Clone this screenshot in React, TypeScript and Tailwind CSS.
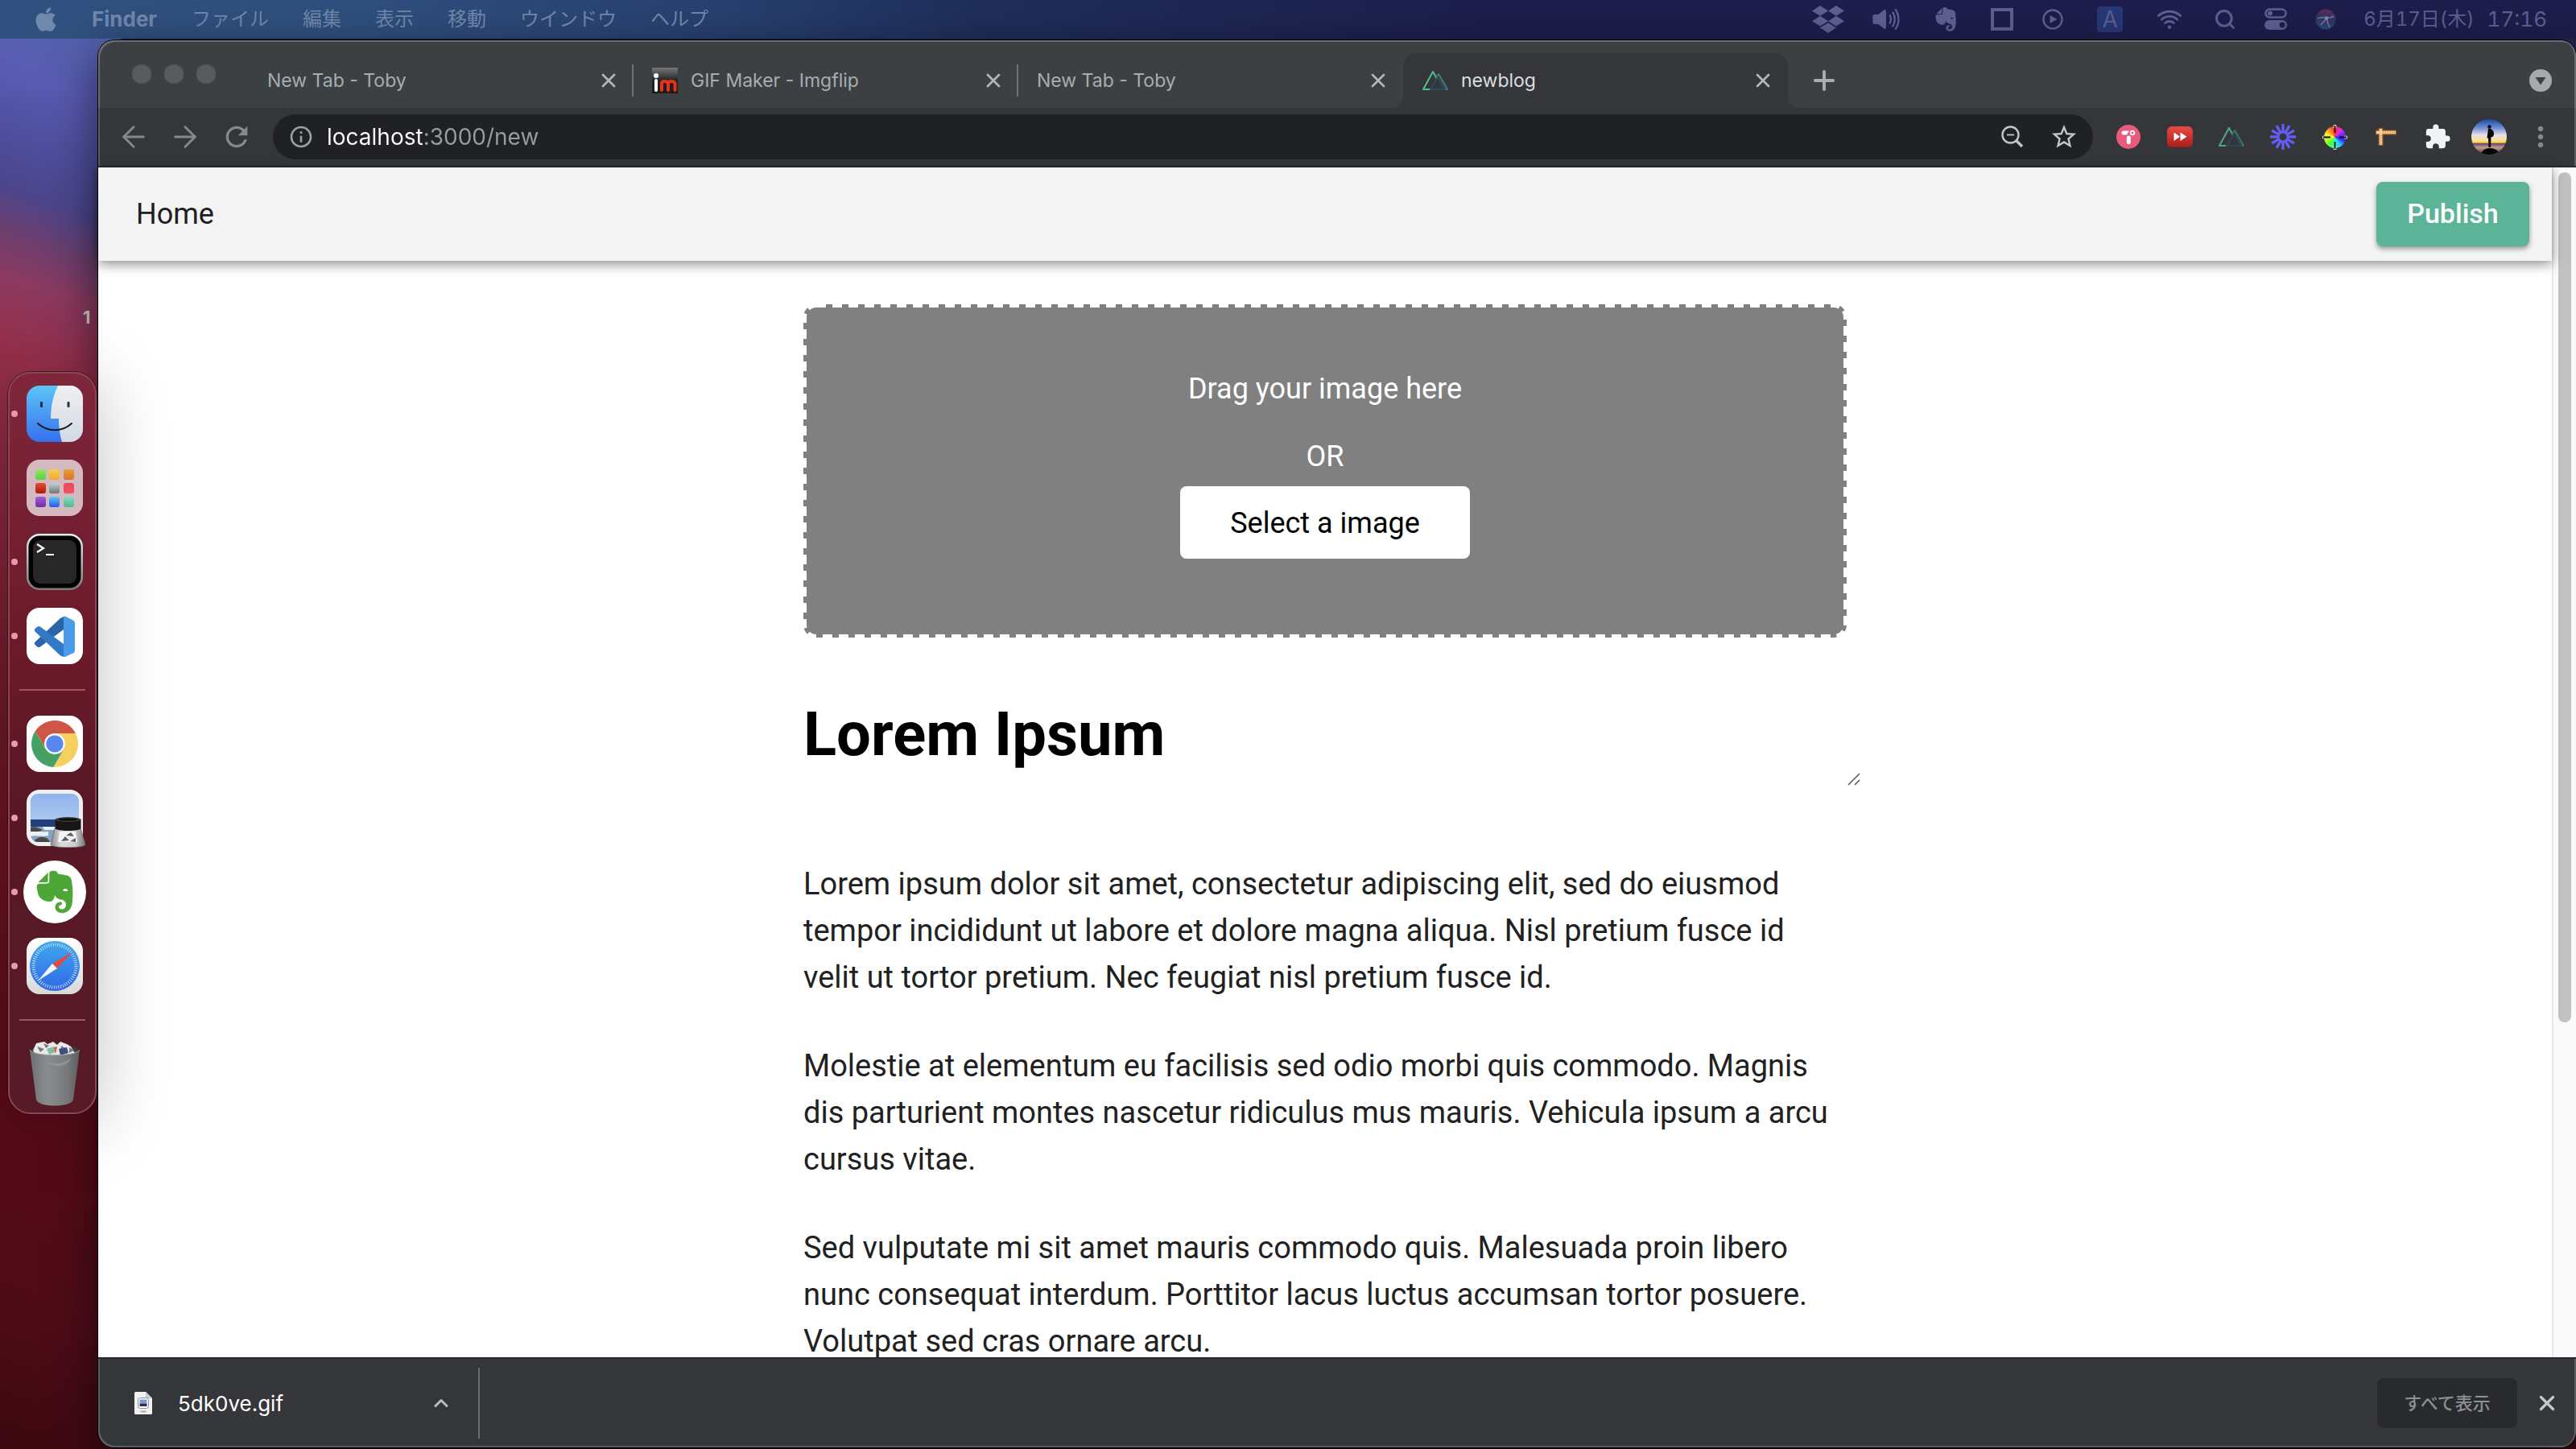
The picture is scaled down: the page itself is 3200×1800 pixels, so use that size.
import React, { type ReactNode } from 'react';
import { FaApple, FaDropbox, FaEvernote } from 'react-icons/fa';
import { MdExtension, MdInfoOutline, MdMoreVert, MdRefresh, MdStarBorder } from 'react-icons/md';
import { IoVolumeHigh, IoWifi } from 'react-icons/io5';
import { ArrowLeft, ArrowRight, ChevronUp, Plus, Search, X } from 'lucide-react';

const menus = ['ファイル', '編集', '表示', '移動', 'ウインドウ', 'ヘルプ'];

const paragraphs = [
  'Lorem ipsum dolor sit amet, consectetur adipiscing elit, sed do eiusmod tempor incididunt ut labore et dolore magna aliqua. Nisl pretium fusce id velit ut tortor pretium. Nec feugiat nisl pretium fusce id.',
  'Molestie at elementum eu facilisis sed odio morbi quis commodo. Magnis dis parturient montes nascetur ridiculus mus mauris. Vehicula ipsum a arcu cursus vitae.',
  'Sed vulputate mi sit amet mauris commodo quis. Malesuada proin libero nunc consequat interdum. Porttitor lacus luctus accumsan tortor posuere. Volutpat sed cras ornare arcu.',
];

/* ---------- menu bar ---------- */

function ControlCenterIcon() {
  return (
    <svg viewBox="0 0 28 28" className="size-7 shrink-0">
      <rect x="1.5" y="1.5" width="25" height="10" rx="5" fill="none" stroke="currentColor" strokeWidth="2.5" />
      <circle cx="7" cy="6.5" r="3" fill="currentColor" />
      <rect x="0" y="15" width="28" height="12" rx="6" fill="currentColor" />
      <circle cx="22" cy="21" r="3.4" fill="#1d1e4c" />
    </svg>
  );
}

function SiriIcon() {
  return (
    <svg viewBox="0 0 28 28" className="size-7">
      <defs>
        <linearGradient id="siri" x1="0.6" y1="0" x2="0.4" y2="1">
          <stop offset="0" stopColor="#5f2a5c" />
          <stop offset="0.5" stopColor="#32335f" />
          <stop offset="1" stopColor="#274a84" />
        </linearGradient>
      </defs>
      <circle cx="14" cy="14" r="12.5" fill="url(#siri)" />
      <path d="M4 13q6-2 11-1t9-2" fill="none" stroke="#3f8a8e" strokeWidth="1.6" />
      <path d="M8 21q4-4 7-9M15 12q1 6 4 12" fill="none" stroke="#7d6fa0" strokeWidth="1.6" />
      <circle cx="15" cy="12.500" r="2.2" fill="#8a86a8" />
    </svg>
  );
}

function StatusButton({ label, className, children }: { label: string; className: string; children: ReactNode }) {
  return (
    <button aria-label={label} className={`flex shrink-0 items-center justify-center ${className}`}>
      {children}
    </button>
  );
}

function MenuBar() {
  return (
    <header className="flex h-12 shrink-0 items-center bg-[linear-gradient(to_right,#30507f_0%,#2f4f7e_14%,#27406f_28%,#1f2e5a_38%,#1d1e4c_58%,#1d1e4c_100%)] text-2xl text-[#7088ac]">
      <button aria-label="Apple" className="ml-[41px] flex w-8 justify-center text-[34px]">
        <FaApple />
      </button>
      <button className="ml-[41px] text-[26px] font-bold">Finder</button>
      <nav className="ml-[43px] flex gap-[42px]">
        {menus.map((m) => (
          <button key={m} className="whitespace-nowrap">
            {m}
          </button>
        ))}
      </nav>
      <div className="ml-auto flex items-center gap-6 pr-9 text-[#5f5f92]">
        <StatusButton label="Dropbox" className="w-[46px] text-[40px]">
          <FaDropbox />
        </StatusButton>
        <StatusButton label="Volume" className="w-[50px] text-[38px]">
          <IoVolumeHigh />
        </StatusButton>
        <StatusButton label="Evernote" className="w-[50px] text-[34px]">
          <FaEvernote />
        </StatusButton>
        <StatusButton label="Window" className="w-[42px]">
          <span className="size-7 border-4 border-current" />
        </StatusButton>
        <StatusButton label="Play" className="w-9">
          <svg viewBox="0 0 26 26" className="size-[26px]">
            <circle cx="13" cy="13" r="11.5" fill="none" stroke="currentColor" strokeWidth="2.4" />
            <path d="M9.5 8v10l9-5z" fill="currentColor" />
          </svg>
        </StatusButton>
        <StatusButton label="Input source" className="w-[58px]">
          <span className="flex size-8 items-center justify-center rounded bg-[#283878] text-[28px] leading-8 text-[#5b5f8c]">A</span>
        </StatusButton>
        <StatusButton label="Wi-Fi" className="w-[42px] text-[36px]">
          <IoWifi />
        </StatusButton>
        <StatusButton label="Search" className="w-12">
          <Search className="size-7" strokeWidth={2.6} />
        </StatusButton>
        <StatusButton label="Control center" className="w-[30px]">
          <ControlCenterIcon />
        </StatusButton>
        <StatusButton label="Siri" className="w-[46px]">
          <SiriIcon />
        </StatusButton>
        <button className="flex items-center gap-4 whitespace-nowrap text-[26px]">
          <span className="text-2xl tabular-nums">6月17日(木)</span>
          <span className="tabular-nums">17:16</span>
        </button>
      </div>
    </header>
  );
}

/* ---------- dock ---------- */

function FinderIcon() {
  return (
    <svg viewBox="0 0 70 70" className="size-[70px] rounded-2xl">
      <defs>
        <linearGradient id="fb" x1="0" y1="0" x2="0" y2="1">
          <stop offset="0" stopColor="#5cc5f7" />
          <stop offset="1" stopColor="#3570ee" />
        </linearGradient>
        <linearGradient id="fw" x1="0" y1="0" x2="0" y2="1">
          <stop offset="0" stopColor="#f0eff1" />
          <stop offset="1" stopColor="#d3d9e4" />
        </linearGradient>
      </defs>
      <rect width="70" height="70" fill="url(#fb)" />
      <path d="M39 0C33 12 30 26 30 41h10c0 10 1 20 4 29h26V0z" fill="url(#fw)" />
      <rect x="17" y="20" width="3" height="7" rx="1" fill="#222b3a" />
      <rect x="50.500" y="20" width="3" height="7" rx="1" fill="#333" />
      <path d="M14 47c12 11 30 11 42 0" fill="none" stroke="#15181d" strokeWidth="2" strokeLinecap="round" />
    </svg>
  );
}

const launchpadTiles = [
  ['#8fe86a', '#5bd038'],
  ['#f8ce4a', '#f0a82e'],
  ['#eb9d3c', '#d97428'],
  ['#e44a35', '#a91d12'],
  ['#c5ced6', '#6f7476'],
  ['#e8485f', '#ee5560'],
  ['#a85ad8', '#6e2fa8'],
  ['#5cc8f8', '#2b55e8'],
  ['#84dccc', '#55b886'],
];

function LaunchpadIcon() {
  return (
    <div className="grid size-[70px] grid-cols-3 content-center justify-center justify-items-center gap-y-1 rounded-2xl bg-[#d4b9c0] px-[9px]">
      {launchpadTiles.map(([a, b]) => (
        <span key={a} className="size-[13px] rounded-[3px]" style={{ backgroundImage: `linear-gradient(${a}, ${b})` }} />
      ))}
    </div>
  );
}

function TerminalIcon() {
  return (
    <svg viewBox="0 0 70 70" className="size-[70px]">
      <defs>
        <linearGradient id="tb" x1="0" y1="0" x2="0" y2="1">
          <stop offset="0" stopColor="#dff0f5" />
          <stop offset="1" stopColor="#7a7a7a" />
        </linearGradient>
      </defs>
      <rect width="70" height="70" rx="16" fill="url(#tb)" />
      <rect x="2.500" y="2.500" width="65" height="65" rx="14" fill="#000" />
      <rect x="8" y="8" width="54" height="54" rx="9" fill="#272727" />
      <path d="M13 13l8 5-8 5M24 26h10" fill="none" stroke="#fff" strokeWidth="2.2" />
    </svg>
  );
}

function VsCodeIcon() {
  return (
    <svg viewBox="0 0 70 70" className="size-[70px]">
      <rect width="70" height="70" rx="16" fill="#fff" />
      <path d="M46 11v16L17 48.500q-2 1.200-3.500 0L10.500 46q-1.500-1.800 0-3.500L42 13z" fill="#2966a8" />
      <path d="M46 61V45L17 23.500q-2-1.200-3.500 0L10.500 26q-1.500 1.800 0 3.500L42 59.500z" fill="#3279c6" />
      <path d="M46 11q1-1 3 0l9.500 5q1.500 1 1.500 3v34q0 2-1.500 3L49 60.500q-2 1-3 0z" fill="#4a9bea" />
    </svg>
  );
}

function ChromeIcon() {
  return (
    <svg viewBox="0 0 70 70" className="size-[70px]">
      <rect width="70" height="70" rx="16" fill="#fdfdfd" />
      <path d="M10.800 19.100A29 29 0 0 1 60.900 22H35L23.700 41.500z" fill="#cf5647" />
      <path d="M60.900 22A29 29 0 0 1 33.300 63.900L46.300 41.500 35 22z" fill="#f7cf5c" />
      <path d="M33.300 63.900A29 29 0 0 1 10.800 19.100L23.700 41.500H46.300z" fill="#47a063" />
      <circle cx="35" cy="35" r="13" fill="#f4f5f8" />
      <circle cx="35" cy="35" r="10.600" fill="#5686ee" />
    </svg>
  );
}

function PreviewIcon() {
  return (
    <svg viewBox="0 0 74 74" className="-mr-1 size-[74px] shrink-0">
      <defs>
        <linearGradient id="sky" x1="0" y1="0" x2="0" y2="1">
          <stop offset="0" stopColor="#8fb4ec" />
          <stop offset="1" stopColor="#c3d6f3" />
        </linearGradient>
        <linearGradient id="glass" x1="0" y1="0" x2="1" y2="0">
          <stop offset="0" stopColor="#8a8a8a" />
          <stop offset="0.300" stopColor="#dcdcdc" />
          <stop offset="0.700" stopColor="#cfcfcf" />
          <stop offset="1" stopColor="#777" />
        </linearGradient>
        <clipPath id="photo">
          <rect x="5" y="7" width="60" height="60" rx="9" />
        </clipPath>
      </defs>
      <rect y="2" width="70" height="70" rx="16" fill="#f0eff0" />
      <g clipPath="url(#photo)">
        <rect x="5" y="7" width="60" height="60" fill="url(#sky)" />
        <rect x="5" y="39" width="60" height="10" fill="#22407c" />
        <rect x="5" y="48" width="60" height="20" fill="#86a4c4" />
        <path d="M5 54c6-3 12 2 22 0v5c-8 2-14-1-22 1zM20 48h16v4H22z" fill="#e9f0f6" />
        <path d="M5 49c5-2 9 0 15 3l-5 2H5zM9 66c6-7 14-6 18-2l3 4H9z" fill="#4b4742" />
      </g>
      <path d="M35 50l-5 20c0 5 43 5 43 0l-6-20z" fill="url(#glass)" stroke="#666" strokeWidth="0.800" />
      <path d="M41 54l-2 13h24l-2-13z" fill="#f4f4f4" />
      <path d="M43 66l5-6 5 5zM49 59l6-4 4 5zM54 66l7-4v5z" fill="#59636d" />
      <path d="M35.500 39v11c0 4 32 4 32 0V39z" fill="#161616" />
      <ellipse cx="51.500" cy="39" rx="16" ry="3" fill="#3a3a3a" />
      <ellipse cx="51.500" cy="39" rx="12" ry="1.600" fill="#0d0d0d" />
    </svg>
  );
}

function EvernoteIcon() {
  return (
    <span className="-mx-1 flex size-[78px] shrink-0 items-center justify-center rounded-full bg-white text-[60px] text-[#4da636]">
      <FaEvernote />
    </span>
  );
}

function SafariIcon() {
  return (
    <svg viewBox="0 0 70 70" className="size-[70px]">
      <defs>
        <linearGradient id="sf" x1="0" y1="0" x2="0" y2="1">
          <stop offset="0" stopColor="#41a8ee" />
          <stop offset="1" stopColor="#2f68e4" />
        </linearGradient>
        <linearGradient id="sfb" x1="0" y1="0" x2="0" y2="1">
          <stop offset="0" stopColor="#fff" />
          <stop offset="1" stopColor="#d9d9d9" />
        </linearGradient>
      </defs>
      <rect width="70" height="70" rx="16" fill="url(#sfb)" />
      <circle cx="35" cy="35" r="31" fill="url(#sf)" />
      <circle cx="35" cy="35" r="26.500" fill="none" stroke="#cfe6fb" strokeWidth="4" strokeDasharray="0.900 1.870" />
      <path d="M57 17.500L38 38 32 32z" fill="#e4493f" />
      <path d="M14 53.500L32 32 38 38z" fill="#f4f4f4" />
    </svg>
  );
}

function TrashIcon() {
  return (
    <svg viewBox="0 0 64 82" className="h-[82px] w-16">
      <defs>
        <linearGradient id="bin" x1="0" y1="0" x2="1" y2="0">
          <stop offset="0" stopColor="#6d6f72" />
          <stop offset="0.350" stopColor="#8a8c8e" />
          <stop offset="0.750" stopColor="#77797b" />
          <stop offset="1" stopColor="#5a5c5f" />
        </linearGradient>
      </defs>
      <ellipse cx="32" cy="12" rx="30" ry="7" fill="#3c3d40" />
      <path d="M5 12l4-9 10-2 4 3 7-3 5 4 4-4 8 3 5 3 5 8-6 7H12z" fill="#e9e9ea" />
      <path d="M10 7l9 3-5 4zM18 3l7 3-4 3zM40 6l8 5-9 3zM50 8l6 4-6 3z" fill="#77797e" />
      <path d="M22 10l9-3 2 7-8 3z" fill="#7fc0a8" />
      <path d="M31 8l2 8 2-9z" fill="#d9573c" />
      <path d="M37 10l10-2 2 7-10 3z" fill="#3f4c7e" />
      <path d="M1 11c4 9 58 9 62 0l-8 62c-2 10-44 10-46 0z" fill="url(#bin)" />
      <path d="M1 11c4 9 58 9 62 0" fill="none" stroke="#a3a5a7" strokeWidth="1" />
      <path d="M22 26c12 4 22 2 30-5-2 10-18 14-30 5z" fill="#a5a7a9" opacity="0.500" />
    </svg>
  );
}

function DockItem({ label, running, children }: { label: string; running?: boolean; children: ReactNode }) {
  return (
    <button aria-label={label} className="flex h-[92px] w-full items-center gap-[11px] pl-0.5">
      <span className={running ? 'size-2 rounded-full bg-[#ea9aae]' : 'size-2'} />
      <span className="flex w-[70px] items-center justify-center">{children}</span>
    </button>
  );
}

function DockDivider() {
  return (
    <div className="flex h-[42px] items-center px-3">
      <span className="h-0.5 w-full bg-[#a05468]" />
    </div>
  );
}

function Dock() {
  return (
    <nav
      aria-label="Dock"
      className="relative z-20 ml-2.5 w-[110px] rounded-[28px] border-2 border-[#8b4656] bg-[linear-gradient(#7f263b,#6b1a29_38%,#571725_60%,#591a28)] pt-1 pb-0.5 shadow-[0_0_0_1px_rgba(40,5,15,0.6),0_10px_90px_rgba(0,0,0,0.25)]"
    >
      <DockItem label="Finder" running><FinderIcon /></DockItem>
      <DockItem label="Launchpad"><LaunchpadIcon /></DockItem>
      <DockItem label="Terminal" running><TerminalIcon /></DockItem>
      <DockItem label="Visual Studio Code" running><VsCodeIcon /></DockItem>
      <DockDivider />
      <DockItem label="Chrome" running><ChromeIcon /></DockItem>
      <DockItem label="Preview" running><PreviewIcon /></DockItem>
      <DockItem label="Evernote" running><EvernoteIcon /></DockItem>
      <DockItem label="Safari" running><SafariIcon /></DockItem>
      <DockDivider />
      <DockItem label="Trash"><TrashIcon /></DockItem>
    </nav>
  );
}

/* ---------- browser chrome ---------- */

function NuxtIcon({ dim }: { dim?: boolean }) {
  return (
    <svg viewBox="0 0 32 26" className={dim ? 'h-[26px] w-8 opacity-85' : 'h-[26px] w-8'} fill="none" strokeWidth="2" strokeLinejoin="round">
      <path d="M10 24H1L13 2l5 9" stroke="#4fc08d" />
      <path d="M17 9l3-4 11 19h-8" stroke="#3b8070" />
      <path d="M10 24L19 9l9 15z" stroke="#2f495e" />
    </svg>
  );
}

function ImgflipIcon() {
  return (
    <svg viewBox="0 0 32 32" className="size-8">
      <defs>
        <linearGradient id="im" x1="0" y1="0" x2="0" y2="1">
          <stop offset="0" stopColor="#777" />
          <stop offset="0.500" stopColor="#222" />
          <stop offset="1" stopColor="#1b1b1b" />
        </linearGradient>
      </defs>
      <rect width="32" height="32" fill="url(#im)" />
      <circle cx="5" cy="10" r="3" fill="#fff" />
      <path d="M5 16v12" stroke="#fff" strokeWidth="4" strokeLinecap="round" />
      <path d="M12 28V20q0-3 3.500-3T20 20v8M20 20q0-3 4-3t4.500 3v8" fill="none" stroke="#e8301c" strokeWidth="4" strokeLinecap="round" />
    </svg>
  );
}

function Tab({ title, icon, active, divider }: { title: string; icon?: ReactNode; active?: boolean; divider?: boolean }) {
  return (
    <div
      className={
        active
          ? 'relative flex h-[68px] w-[478px] shrink items-center rounded-t-2xl bg-[#35363a] pr-[17px] pl-6 text-[#dcdee0]'
          : 'relative flex h-[68px] w-[478px] shrink items-center pr-[17px] pl-[23px] text-[#a9adb0]'
      }
    >
      {active && (
        <>
          <svg viewBox="0 0 16 16" className="absolute bottom-0 -left-4 size-4">
            <path d="M16 0v16H0Q16 16 16 0z" fill="#35363a" />
          </svg>
          <svg viewBox="0 0 16 16" className="absolute -right-4 bottom-0 size-4">
            <path d="M0 0v16h16Q0 16 0 0z" fill="#35363a" />
          </svg>
        </>
      )}
      <button role="tab" aria-selected={!!active} className="flex min-w-0 flex-1 items-center gap-4">
        {icon}
        <span className="truncate text-[23px]">{title}</span>
      </button>
      <button aria-label={`Close ${title}`} className="text-[#b4b7ba]">
        <X className="size-7" strokeWidth={2.3} />
      </button>
      {divider && <span className="absolute top-3.5 right-0 h-10 w-0.5 bg-[#707376]" />}
    </div>
  );
}

function TabStrip() {
  return (
    <div className="flex h-[84px] shrink-0 items-end rounded-t-[20px] bg-[#3c4043] shadow-[inset_2px_2px_0_#6a6d70,inset_-2px_0_0_#6a6d70]">
      <div className="flex gap-4 self-center pr-[41px] pl-[42px]">
        <span className="size-6 rounded-full bg-[#585c5e]" />
        <span className="size-6 rounded-full bg-[#585c5e]" />
        <span className="size-6 rounded-full bg-[#585c5e]" />
      </div>
      <div role="tablist" className="flex min-w-0">
        <Tab title="New Tab - Toby" divider />
        <Tab title="GIF Maker - Imgflip" icon={<ImgflipIcon />} divider />
        <Tab title="New Tab - Toby" />
        <Tab title="newblog" icon={<NuxtIcon />} active />
      </div>
      <button aria-label="New tab" className="ml-[26px] flex h-[68px] items-center text-[#a9adb0]">
        <Plus className="size-[38px]" strokeWidth={2.500} />
      </button>
      <button aria-label="Tab search" className="mr-[30px] ml-auto flex h-[68px] items-center">
        <svg viewBox="0 0 28 28" className="size-7">
          <circle cx="14" cy="14" r="14" fill="#a6aaad" />
          <path d="M7.500 10h13L14 19.500z" fill="#3c4043" />
        </svg>
      </button>
    </div>
  );
}

function ToolButton({ label, children }: { label: string; children: ReactNode }) {
  return (
    <button aria-label={label} className="flex h-14 w-16 shrink-0 items-center justify-center">
      {children}
    </button>
  );
}

const rays = [0, 30, 60, 90, 120, 150, 180, 210, 240, 270, 300, 330];

function Toolbar() {
  return (
    <div className="flex h-[74px] shrink-0 items-start border-b-2 border-[#28292b] bg-[#35363a] px-3 pt-2 text-[#86888b] shadow-[inset_2px_0_0_#5b5d60,inset_-2px_0_0_#5b5d60]">
      <ToolButton label="Back"><ArrowLeft className="size-[42px]" strokeWidth={1.700} /></ToolButton>
      <ToolButton label="Forward"><ArrowRight className="size-[42px]" strokeWidth={1.700} /></ToolButton>
      <ToolButton label="Reload"><MdRefresh className="size-10" /></ToolButton>
      <div className="mr-3 ml-[13px] flex h-14 min-w-0 flex-1 items-center rounded-full bg-[#202124] pr-1 pl-[19px] text-[#c3c5c7]">
        <MdInfoOutline className="mr-4 size-8 shrink-0 text-[#9aa0a6]" />
        <input
          aria-label="Address"
          defaultValue="localhost:3000/new"
          className="min-w-0 flex-1 bg-[linear-gradient(to_right,#ffffff_122px,#999c9f_122px)] bg-clip-text text-[28px] text-transparent outline-none"
        />
        <ToolButton label="Zoom">
          <svg viewBox="0 0 28 28" className="size-7" fill="none" stroke="currentColor">
            <circle cx="11.500" cy="11.500" r="10" strokeWidth="2.400" />
            <path d="M18.500 18.500L26 26" strokeWidth="3.400" />
            <path d="M7 11.500h9" strokeWidth="1.800" />
          </svg>
        </ToolButton>
        <ToolButton label="Bookmark"><MdStarBorder className="size-9" /></ToolButton>
      </div>
      <ToolButton label="Toby">
        <svg viewBox="0 0 30 30" className="size-[30px]">
          <circle cx="15" cy="15" r="15" fill="#e95b7d" />
          <path d="M9 7.500h7l-3 5H9a2.500 2.500 0 0 1 0-5z" fill="#fff" />
          <circle cx="20" cy="10" r="2.300" fill="none" stroke="#fff" strokeWidth="1.800" />
          <rect x="12.800" y="13.500" width="5" height="10.500" rx="2.500" fill="#fff" />
        </svg>
      </ToolButton>
      <ToolButton label="Playback speed">
        <svg viewBox="0 0 32 26" className="h-[26px] w-8">
          <defs>
            <linearGradient id="ff" x1="0" y1="0" x2="0" y2="1">
              <stop offset="0" stopColor="#ec4a45" />
              <stop offset="1" stopColor="#a81d18" />
            </linearGradient>
          </defs>
          <rect width="32" height="26" rx="6" fill="url(#ff)" />
          <path d="M8.500 7.500v10.500l7.500-5.200zM16.500 7.500v10.500l8-5.200z" fill="#fff" />
        </svg>
      </ToolButton>
      <ToolButton label="Nuxt"><NuxtIcon dim /></ToolButton>
      <ToolButton label="Loom">
        <svg viewBox="-16 -16 32 32" className="size-8" stroke="#625df5">
          <circle r="6" fill="none" strokeWidth="3" />
          {rays.map((r) => (
            <path key={r} d="M0-6.500V-16" strokeWidth="3.400" transform={`rotate(${r})`} />
          ))}
        </svg>
      </ToolButton>
      <ToolButton label="Color picker">
        <span className="relative flex size-[31px] items-center justify-center">
          <span className="size-[27px] rounded-full bg-[conic-gradient(#ff2a2a,#f02ae0,#6a2aff,#2a2aff,#2ac8ff,#2affc0,#4cff3a,#b8ff2a,#fff02a,#ff8a2a,#ff2a2a)]" />
          <svg viewBox="0 0 31 31" className="absolute inset-0" fill="none">
            <path d="M15.500 0v4M15.500 27v4M0 15.500h4M27 15.500h4" stroke="#ddd" strokeWidth="3.600" />
            <path d="M15.500 1v9M15.500 21v9M1 15.500h9M21 15.500h9" stroke="#111" strokeWidth="1.800" />
          </svg>
        </span>
      </ToolButton>
      <ToolButton label="Ruler">
        <svg viewBox="0 0 28 28" className="size-7">
          <path d="M1 8.500h26M7.500 3v22" stroke="#a35c1f" strokeWidth="6" />
          <path d="M2 8.500h24M7.500 4v20" stroke="#f6cf98" strokeWidth="3.400" />
          <path d="M10 8.500h16M7.500 12v12" stroke="#c98d4c" strokeWidth="1.500" strokeDasharray="1.200 1.600" />
        </svg>
      </ToolButton>
      <ToolButton label="Extensions"><MdExtension className="size-[34px] text-[#f1f3f4]" /></ToolButton>
      <ToolButton label="Profile">
        <svg viewBox="0 0 44 44" className="size-11 rounded-full">
          <defs>
            <linearGradient id="dusk" x1="0" y1="0" x2="0" y2="1">
              <stop offset="0" stopColor="#1a49a8" />
              <stop offset="0.250" stopColor="#6f8fd0" />
              <stop offset="0.450" stopColor="#e8dfe6" />
              <stop offset="0.620" stopColor="#fbe08a" />
              <stop offset="0.670" stopColor="#f0b030" />
              <stop offset="0.690" stopColor="#5b4a72" />
              <stop offset="0.800" stopColor="#c99a8a" />
              <stop offset="1" stopColor="#3a2c3c" />
            </linearGradient>
          </defs>
          <rect width="44" height="44" fill="url(#dusk)" />
          <circle cx="22.500" cy="9.500" r="2.200" fill="#000" />
          <path d="M21 12h3q4 2 4 6t-3.500 4.500L24 35h-2.500L21 24l-1.500-1z" fill="#080808" />
          <path d="M12 44q2-8 11-8t13 8z" fill="#050505" />
        </svg>
      </ToolButton>
      <ToolButton label="Menu"><MdMoreVert className="size-10" /></ToolButton>
    </div>
  );
}

/* ---------- page ---------- */

function DropZone() {
  return (
    <section className="relative flex flex-col items-center rounded-2xl bg-[#808080] pt-[78px] pb-[98px] text-4xl leading-[54px] text-white">
      <svg className="pointer-events-none absolute inset-0 size-full" aria-hidden="true">
        <rect width="100%" height="100%" rx="16" fill="none" stroke="#fff" strokeWidth="8" strokeDasharray="12 8" />
      </svg>
      <p>Drag your image here</p>
      <p className="mt-[30px]">OR</p>
      <button className="mt-2.5 h-[90px] rounded-lg bg-white px-[62px] pt-0.5 text-black">Select a image</button>
    </section>
  );
}

function Page() {
  return (
    <div className="flex min-h-0 flex-1 bg-white">
      <div className="flex min-w-0 flex-1 flex-col">
        <header className="relative flex h-[116px] shrink-0 items-center justify-between bg-[#f4f4f4] pr-7 pl-[47px] text-4xl text-[#202020] shadow-[0_4px_14px_rgba(0,0,0,0.45)]">
          <a href="#home">Home</a>
          <button className="h-20 w-[190px] rounded-lg bg-[#5bb498] text-[34px] font-medium text-white shadow-[0_3px_6px_rgba(0,0,0,0.4)]">
            Publish
          </button>
        </header>
        <main className="min-h-0 flex-1 overflow-hidden pt-[54px]">
          <article className="mx-auto w-[1296px] max-w-full">
            <DropZone />
            <div className="relative mt-[50px] -mr-5">
              <textarea
                aria-label="Title"
                rows={1}
                defaultValue="Lorem Ipsum"
                className="block w-full resize-none overflow-hidden pt-6 pb-5 text-[76px] leading-[92px] font-bold text-black outline-none"
              />
              <svg viewBox="0 0 16 16" className="absolute right-[3px] bottom-0.5 size-4" stroke="#555" strokeWidth="1.500">
                <path d="M1 15L15 1M9 15L15 9" />
              </svg>
            </div>
            <div className="mt-[91px] flex flex-col gap-[52px] text-[38px] leading-[58px] text-[#212121]">
              {paragraphs.map((p) => (
                <p key={p}>{p}</p>
              ))}
            </div>
          </article>
        </main>
      </div>
      <div className="w-[30px] shrink-0 border-l-2 border-[#e8e8e8] bg-[#fafafa] pt-1.5 pl-1.5">
        <div className="h-[1056px] w-4 rounded-full bg-[#c1c1c1]" />
      </div>
    </div>
  );
}

function DownloadBar() {
  return (
    <footer className="flex h-28 shrink-0 items-center rounded-b-[20px] border-t-2 border-[#28292c] bg-[#35363a] shadow-[inset_2px_-2px_0_#5b5d60,inset_-2px_0_0_#5b5d60]">
      <button className="ml-[45px] flex items-center gap-8 text-[26px] text-white">
        <svg viewBox="0 0 22 28" className="h-7 w-[22px]">
          <path d="M1.500 0H14l8 8v18.500q0 1.500-1.500 1.500h-19Q0 28 0 26.500v-25Q0 0 1.500 0z" fill="#f1f1f1" />
          <path d="M14 0v8h8z" fill="#c9cacd" />
          <rect x="4.500" y="7.500" width="13" height="13" rx="3" fill="#fff" stroke="#8d8f94" />
          <rect x="6.500" y="9.500" width="9" height="5" fill="#7c9ddb" />
          <rect x="6.500" y="14.500" width="9" height="3.500" fill="#262f4c" />
          <path d="M7.500 24.500h7" stroke="#aaa" strokeWidth="2" />
        </svg>
        <span>5dk0ve.gif</span>
      </button>
      <button aria-label="Download options" className="ml-[182px] text-[#b9bbbd]">
        <ChevronUp className="size-7" strokeWidth={2.600} />
      </button>
      <span className="ml-8 h-[88px] w-0.5 bg-[#6b6d70]" />
      <button className="ml-auto h-[62px] w-[174px] rounded-lg bg-[#292a2d] text-[22px] font-medium text-[#8b9093]">すべて表示</button>
      <button aria-label="Close downloads" className="mr-[21px] ml-[22px] text-[#c6c8ca]">
        <X className="size-[30px]" strokeWidth={2.600} />
      </button>
    </footer>
  );
}

export default function App() {
  return (
    <div className="flex h-screen w-full flex-col overflow-hidden bg-[linear-gradient(#22234f,#3a0810)] font-['Inter','Noto_Sans_CJK_JP',sans-serif]">
      <MenuBar />
      <div className="flex min-h-0 flex-1">
        <aside className="relative w-[150px] shrink-0 bg-[linear-gradient(200deg,#5263ad_0%,#5a5bb3_5%,#4f4f9f_9%,#4c468c_13%,#6b3f70_16%,#8a3a60_19%,#97304c_24%,#8f2d45_28%,#6a1826_50%,#5a0c18_75%,#4e0c18_90%,#3c0810_100%)] pt-[414px]">
          <span className="absolute top-[330px] left-[103px] text-[22px] font-bold text-[#d8ccd4]">1</span>
          <Dock />
        </aside>
        <div className="relative z-10 mt-0.5 mb-0.5 -ml-7 flex min-w-0 flex-1 flex-col rounded-[20px] shadow-[0_0_0_1px_#000,0_20px_60px_rgba(0,0,0,0.6)]">
          <TabStrip />
          <Toolbar />
          <div className="flex min-h-0 flex-1 flex-col font-['Roboto',sans-serif]">
            <Page />
          </div>
          <DownloadBar />
        </div>
      </div>
    </div>
  );
}
